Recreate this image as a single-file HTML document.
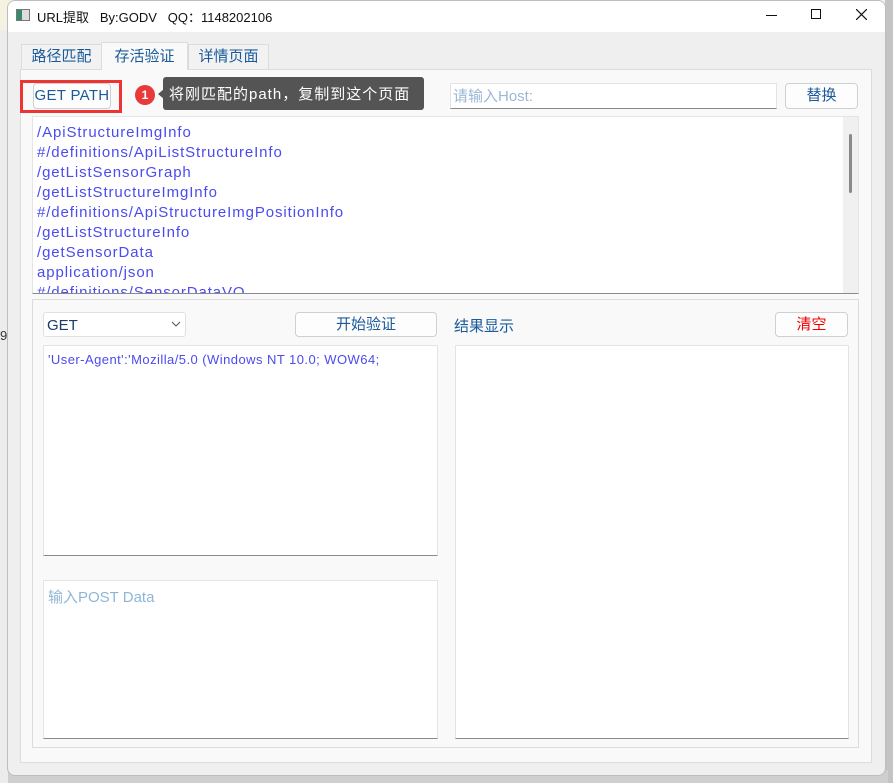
<!DOCTYPE html>
<html><head><meta charset="utf-8"><style>
*{box-sizing:border-box;margin:0;padding:0}
body{width:893px;height:783px;position:relative;overflow:hidden;background:#ececec;font-family:"Liberation Sans","Noto Sans CJK SC",sans-serif;font-size:14px}
.a{position:absolute}
.btn{position:absolute;background:#fdfdfd;border:1px solid #d0d0d0;border-radius:4px;color:#1a5a9a;font-size:15px;text-align:center;line-height:23px}
.ta{position:absolute;background:#fff;border:1px solid #e4e4e4;border-bottom:1px solid #8a8a8a}
.ln{color:#4b4bef;font-size:15px;line-height:20px;letter-spacing:0.9px}
</style></head><body>
<div class="a" style="left:0;top:0;width:893px;height:30px;background:#f6f2e2"></div>
<div class="a" style="left:885px;top:0;width:8px;height:783px;background:#c4c4c4"></div>
<div class="a" style="left:8px;top:770px;width:880px;height:13px;background:#cfcfcf"></div>
<div class="a" style="left:0;top:328px;font-size:13px;color:#333">9</div>
<div class="a" style="left:7px;top:0;width:879px;height:776px;background:#efefef;border:1px solid #bdbdbd;border-radius:8px;overflow:hidden">
 <div class="a" style="left:0;top:0;width:879px;height:31px;background:#fff"></div>
</div>
<!-- title -->
<div class="a" style="left:16px;top:9px;width:14px;height:12px;border:1px solid #777;background:linear-gradient(90deg,#3a8a6a 0 40%,#ddd 40%)"></div>
<div class="a" style="left:37px;top:7px;font-size:13px;color:#111">URL提取&nbsp;&nbsp;&nbsp;By:GODV&nbsp;&nbsp;&nbsp;QQ：1148202106</div>
<div class="a" style="left:766px;top:15px;width:11px;height:1px;background:#111"></div>
<div class="a" style="left:811px;top:9px;width:10px;height:10px;border:1px solid #111"></div>
<svg class="a" style="left:856px;top:9px" width="11" height="11"><path d="M0 0L11 11M11 0L0 11" stroke="#111" stroke-width="1.2"/></svg>
<!-- tabs -->
<div class="a" style="left:21px;top:44px;width:81px;height:25px;background:#f2f2f2;border:1px solid #dcdcdc;border-bottom:none;color:#1a5a9a;font-size:15px;text-align:center;line-height:24px">路径匹配</div>
<div class="a" style="left:188px;top:44px;width:81px;height:25px;background:#f2f2f2;border:1px solid #dcdcdc;border-bottom:none;color:#1a5a9a;font-size:15px;text-align:center;line-height:24px">详情页面</div>
<div class="a" style="left:20px;top:69px;width:852px;height:694px;background:#f9f9f9;border:1px solid #dcdcdc"></div>
<div class="a" style="left:101px;top:42px;width:87px;height:28px;background:#f9f9f9;border:1px solid #dcdcdc;border-bottom:none;color:#1a5a9a;font-size:15px;text-align:center;line-height:27px">存活验证</div>
<!-- top row -->
<div class="a" style="left:20px;top:80px;width:102px;height:33px;border:3px solid #ee3333"></div>
<div class="btn" style="left:33px;top:83px;width:78px;height:26px;line-height:24px;letter-spacing:0.3px">GET PATH</div>
<div class="a" style="left:135px;top:85px;width:20px;height:20px;border-radius:50%;background:#e83a3a;color:#fff;font-size:12px;text-align:center;line-height:20px;font-weight:bold">1</div>
<div class="a" style="left:163px;top:77px;width:261px;height:33px;background:#545454;border-radius:3px;color:#fff;font-size:15px;line-height:35px;padding-left:6px;letter-spacing:1px;white-space:nowrap">将刚匹配的path，复制到这个页面</div>
<div class="a" style="left:158px;top:89px;width:0;height:0;border-top:5px solid transparent;border-bottom:5px solid transparent;border-right:6px solid #545454"></div>
<div class="a" style="left:450px;top:83px;width:327px;height:26px;background:#fff;border:1px solid #e4e4e4;border-bottom:1px solid #888;color:#9bb8d6;font-size:15px;line-height:25px;padding-left:2px">请输入Host:</div>
<div class="btn" style="left:785px;top:83px;width:73px;height:26px">替换</div>
<!-- list -->
<div class="ta" style="left:32px;top:116px;width:827px;height:178px;overflow:hidden;padding:6px 0 0 4px">
 <div class="ln">/ApiStructureImgInfo<br>#/definitions/ApiListStructureInfo<br>/getListSensorGraph<br>/getListStructureImgInfo<br>#/definitions/ApiStructureImgPositionInfo<br>/getListStructureInfo<br>/getSensorData<br>application/json<br>#/definitions/SensorDataVO</div>
 <div class="a" style="left:810px;top:0;width:16px;height:176px;background:#f0f0f0"></div>
 <div class="a" style="left:816px;top:17px;width:3px;height:59px;background:#8a8a8a;border-radius:2px"></div>
</div>
<!-- group -->
<div class="a" style="left:32px;top:299px;width:827px;height:449px;border:1px solid #dcdcdc"></div>
<div class="a" style="left:43px;top:312px;width:143px;height:25px;background:#fff;border:1px solid #e0e0e0;border-radius:3px;color:#1a3a6a;font-size:15px;line-height:25px;padding-left:3px">GET</div>
<svg class="a" style="left:171px;top:321px" width="10" height="6"><path d="M1 1L5 5L9 1" stroke="#555" fill="none"/></svg>
<div class="btn" style="left:295px;top:312px;width:142px;height:25px">开始验证</div>
<div class="a" style="left:454px;top:315px;color:#1a5a9a;font-size:15px">结果显示</div>
<div class="btn" style="left:775px;top:312px;width:73px;height:25px;color:#e00">清空</div>
<div class="ta" style="left:43px;top:345px;width:395px;height:211px;padding:6px 0 0 4px;color:#4b4bef;font-size:13px;letter-spacing:0.45px;white-space:nowrap">'User-Agent':'Mozilla/5.0 (Windows NT 10.0; WOW64;</div>
<div class="ta" style="left:43px;top:580px;width:395px;height:159px;padding:5px 0 0 4px;color:#8fb6d6;font-size:15px">输入POST Data</div>
<div class="ta" style="left:455px;top:345px;width:394px;height:394px"></div>
</body></html>
